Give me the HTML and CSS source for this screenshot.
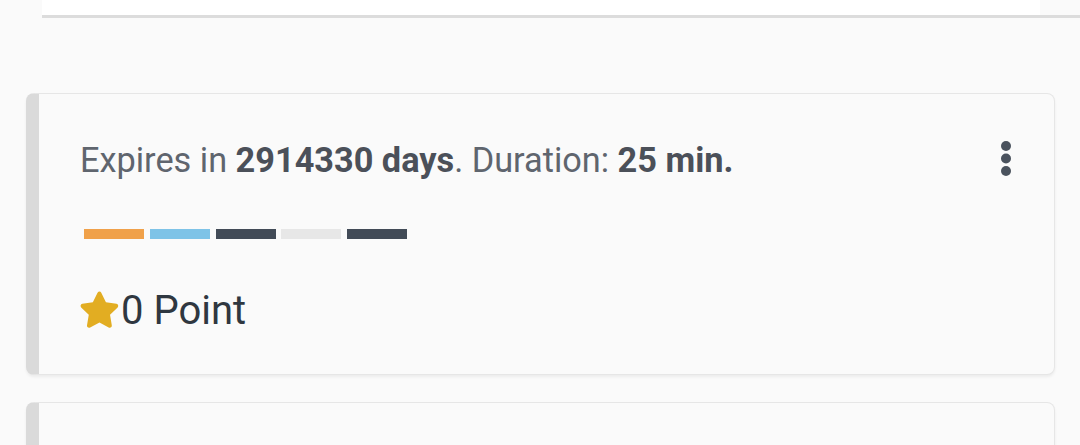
FILE: index.html
```html
<!DOCTYPE html>
<html lang="en">
<head>
	<meta charset="UTF-8">
	<title>Tests</title>
	<link rel="stylesheet" href="styles.css">
</head>
<body>
	<div class="topbar">
		<div class="topbar-panel"></div>
	</div>

	<div class="list">
		<div class="card">
			<div class="card-head">
				<p class="info">Expires in <b>2914330 days</b>. Duration: <b>25 min.</b></p>
				<button class="more" aria-label="More">
					<svg width="12" height="38" viewBox="0 0 12 38">
						<circle cx="6" cy="6" r="5"/>
						<circle cx="6" cy="18.5" r="5"/>
						<circle cx="6" cy="31" r="5"/>
					</svg>
				</button>
			</div>

			<div class="levels">
				<span class="level orange"></span>
				<span class="level blue"></span>
				<span class="level dark"></span>
				<span class="level light"></span>
				<span class="level dark"></span>
			</div>

			<div class="points">
				<svg class="star" width="39" height="39" viewBox="2.2 2 19.6 20">
					<path d="M12 2.3c.4 0 .7.2.9.6l2.4 4.9 5.4.8c.9.1 1.2 1.2.6 1.8l-3.9 3.8.9 5.4c.2.9-.8 1.6-1.6 1.1L12 18.2l-4.8 2.5c-.8.5-1.8-.2-1.6-1.1l.9-5.4-3.9-3.8c-.6-.6-.3-1.7.6-1.8l5.4-.8 2.4-4.9c.3-.4.6-.6 1-.6z"/>
				</svg>
				<span>0 Point</span>
			</div>
		</div>

		<div class="card"></div>
	</div>
</body>
</html>
```

FILE: styles.css
```css
* {
	box-sizing: border-box;
}

body {
	margin: 0;
	background-color: #fafafa;
	font-family: Roboto, "Liberation Sans", sans-serif;
	height: 445px;
	overflow: hidden;
}

.topbar {
	margin-left: 42px;
	border-bottom: 3px solid #dcdcdc;
	height: 18px;
}

.topbar-panel {
	width: 998px;
	height: 15px;
	background-color: #fff;
}

.list {
	padding: 75px 25px 0 26px;
	display: flex;
	flex-direction: column;
	gap: 27px;
	height: 427px;
	overflow: hidden;
}

.card {
	background-color: #fafafa;
	border: 1px solid #e6e6e6;
	border-left: 13px solid #dadada;
	border-radius: 8px;
	box-shadow: 0 2px 3px rgba(0, 0, 0, 0.06);
	height: 282px;
	padding: 40px 0 0 41px;
	flex-shrink: 0;
}

.card-head {
	display: flex;
	justify-content: space-between;
	align-items: flex-start;
}

.info {
	margin: 0;
	font-size: 34.3px;
	line-height: 52px;
	color: #5f656e;
}

.info b {
	color: #4b5059;
	font-weight: 700;
}

.more {
	border: none;
	background: none;
	padding: 0;
	margin: 6px 42px 0 0;
	fill: #4a525d;
	display: block;
}

.levels {
	display: flex;
	gap: 5.75px;
	margin: 43px 0 0 4px;
}

.level {
	width: 60px;
	height: 10px;
}

.orange { background-color: #f0a14a; }
.blue { background-color: #7ec3e7; }
.dark { background-color: #424b57; }
.light { background-color: #e7e7e7; }

.points {
	display: flex;
	align-items: center;
	margin-top: 48px;
	font-size: 40px;
	color: #2f3740;
}

.star {
	fill: #e2ad22;
	margin-right: 2px;
}
```
